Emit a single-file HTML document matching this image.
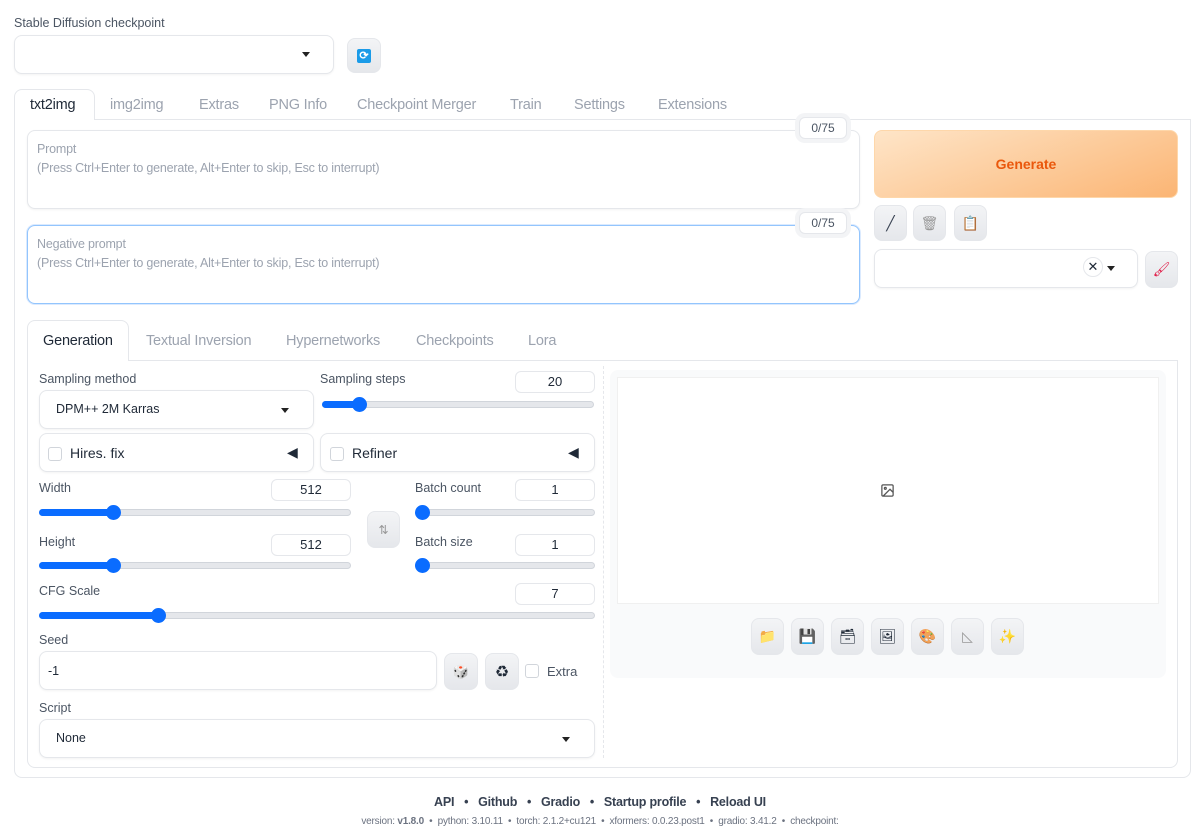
<!DOCTYPE html>
<html><head><meta charset="utf-8"><style>
*{box-sizing:border-box;margin:0;padding:0}
body{width:1200px;height:829px;background:#fff;font-family:"Liberation Sans",sans-serif;color:#1f2937;position:relative;overflow:hidden;font-size:13px}
.a{position:absolute}
.lbl{position:absolute;color:#4b5563;font-size:12.5px}
.box{position:absolute;border:1px solid #e5e7eb;border-radius:8px;background:#fff;box-shadow:0 1px 2px rgba(0,0,0,.05)}
.btn{position:absolute;border-radius:8px;background:linear-gradient(#f3f4f6,#e5e7eb);border:1px solid #e5e7eb;display:flex;align-items:center;justify-content:center;font-size:14px}
.tab{position:absolute;color:#9ca3af;font-size:14.5px;letter-spacing:-0.2px}
.num{position:absolute;border:1px solid #e5e7eb;border-radius:6px;height:22px;width:80px;text-align:center;font-size:13px;line-height:20px;background:#fff}
.track{position:absolute;height:7px;border-radius:4px;background:#e5e7eb;border:1px solid #d1d5db}
.fill{position:absolute;height:7px;border-radius:4px;background:#0a6cff}
.thumb{position:absolute;width:15px;height:15px;border-radius:50%;background:#0a6cff}
.caret{position:absolute;width:0;height:0;border-left:4px solid transparent;border-right:4px solid transparent;border-top:5px solid #222}
.ph{position:absolute;color:#9ca3af;font-size:12.5px;letter-spacing:-0.2px}
.cnt{position:absolute;width:48px;height:22px;border:1px solid #e5e7eb;border-radius:6px;background:#fff;text-align:center;line-height:20px;font-size:12px;color:#4b5563;box-shadow:0 0 0 4px #f3f4f6}
.cb{position:absolute;width:14px;height:14px;border:1px solid #d1d5db;border-radius:3px;background:#fff}
</style></head><body>
<div class="lbl" style="left:14px;top:16px">Stable Diffusion checkpoint</div>
<div class="box" style="left:14px;top:35px;width:320px;height:39px"></div>
<div class="caret" style="left:302px;top:52px"></div>
<div class="btn" style="left:347px;top:38px;width:34px;height:35px"><div style="width:14px;height:14px;background:#1a9be8;border-radius:2px;color:#fff;font-size:11px;font-weight:bold;line-height:14px;text-align:center">⟳</div></div>

<div class="a" style="left:14px;top:89px;width:81px;height:31px;border:1px solid #e5e7eb;border-bottom:none;border-radius:8px 8px 0 0;background:#fff;z-index:2"></div>
<div class="tab" style="left:30px;top:97px;color:#1f2937;z-index:3">txt2img</div>
<div class="tab" style="left:110px;top:97px">img2img</div>
<div class="tab" style="left:199px;top:97px">Extras</div>
<div class="tab" style="left:269px;top:97px">PNG Info</div>
<div class="tab" style="left:357px;top:97px">Checkpoint Merger</div>
<div class="tab" style="left:510px;top:97px">Train</div>
<div class="tab" style="left:574px;top:97px">Settings</div>
<div class="tab" style="left:658px;top:97px">Extensions</div>
<div class="a" style="left:14px;top:119px;width:1177px;height:659px;border:1px solid #e5e7eb;border-radius:0 0 8px 8px"></div>

<div class="box" style="left:27px;top:130px;width:833px;height:79px"></div>
<div class="ph" style="left:37px;top:142px">Prompt</div>
<div class="ph" style="left:37px;top:161px">(Press Ctrl+Enter to generate, Alt+Enter to skip, Esc to interrupt)</div>
<div class="cnt" style="left:799px;top:117px">0/75</div>
<div class="box" style="left:27px;top:225px;width:833px;height:79px;border-color:#93c5fd;box-shadow:0 0 0 1px #dbeafe"></div>
<div class="ph" style="left:37px;top:237px">Negative prompt</div>
<div class="ph" style="left:37px;top:256px">(Press Ctrl+Enter to generate, Alt+Enter to skip, Esc to interrupt)</div>
<div class="cnt" style="left:799px;top:212px">0/75</div>

<div class="a" style="left:874px;top:130px;width:304px;height:68px;border-radius:8px;background:linear-gradient(160deg,#fee5c8,#fbb574);border:1px solid #fed7aa;color:#ea580c;font-weight:bold;font-size:14px;display:flex;align-items:center;justify-content:center">Generate</div>
<div class="btn" style="left:874px;top:205px;width:33px;height:36px;color:#374151">╱</div>
<div class="btn" style="left:913px;top:205px;width:33px;height:36px;color:#999">🗑</div>
<div class="btn" style="left:954px;top:205px;width:33px;height:36px;color:#e38a2c">📋</div>
<div class="box" style="left:874px;top:249px;width:264px;height:39px"></div>
<div class="a" style="left:1083px;top:257px;width:20px;height:20px;border:1px solid #e5e7eb;border-radius:50%;text-align:center;line-height:18px;font-size:13px">✕</div>
<div class="caret" style="left:1107px;top:266px"></div>
<div class="btn" style="left:1145px;top:251px;width:33px;height:37px;color:#e11d48">🖌</div>

<div class="a" style="left:27px;top:320px;width:102px;height:41px;border:1px solid #e5e7eb;border-bottom:none;border-radius:8px 8px 0 0;background:#fff;z-index:2"></div>
<div class="tab" style="left:43px;top:333px;color:#1f2937;z-index:3">Generation</div>
<div class="tab" style="left:146px;top:333px">Textual Inversion</div>
<div class="tab" style="left:286px;top:333px">Hypernetworks</div>
<div class="tab" style="left:416px;top:333px">Checkpoints</div>
<div class="tab" style="left:528px;top:333px">Lora</div>
<div class="a" style="left:27px;top:360px;width:1151px;height:408px;border:1px solid #e5e7eb;border-radius:0 0 8px 8px"></div>

<div class="lbl" style="left:39px;top:372px">Sampling method</div>
<div class="box" style="left:39px;top:390px;width:275px;height:39px"></div>
<div class="a" style="left:56px;top:402px;font-size:12.5px">DPM++ 2M Karras</div>
<div class="caret" style="left:281px;top:408px"></div>
<div class="lbl" style="left:320px;top:372px">Sampling steps</div>
<div class="num" style="left:515px;top:371px">20</div>
<div class="track" style="left:322px;top:401px;width:272px"></div><div class="fill" style="left:322px;top:401px;width:38px"></div><div class="thumb" style="left:352px;top:397px"></div>

<div class="box" style="left:39px;top:433px;width:275px;height:39px"></div>
<div class="cb" style="left:48px;top:447px"></div><div class="a" style="left:70px;top:445px;font-size:14px">Hires. fix</div><div class="a" style="left:287px;top:444px;font-size:14px">◀</div>
<div class="box" style="left:320px;top:433px;width:275px;height:39px"></div>
<div class="cb" style="left:330px;top:447px"></div><div class="a" style="left:352px;top:445px;font-size:14px">Refiner</div><div class="a" style="left:568px;top:444px;font-size:14px">◀</div>

<div class="lbl" style="left:39px;top:481px">Width</div>
<div class="num" style="left:271px;top:479px">512</div>
<div class="track" style="left:39px;top:509px;width:312px"></div><div class="fill" style="left:39px;top:509px;width:75px"></div><div class="thumb" style="left:106px;top:505px"></div>
<div class="lbl" style="left:39px;top:535px">Height</div>
<div class="num" style="left:271px;top:534px">512</div>
<div class="track" style="left:39px;top:562px;width:312px"></div><div class="fill" style="left:39px;top:562px;width:75px"></div><div class="thumb" style="left:106px;top:558px"></div>
<div class="btn" style="left:367px;top:511px;width:33px;height:37px;color:#999;font-size:12px">⇅</div>
<div class="lbl" style="left:415px;top:481px">Batch count</div>
<div class="num" style="left:515px;top:479px">1</div>
<div class="track" style="left:415px;top:509px;width:180px"></div><div class="thumb" style="left:415px;top:505px"></div>
<div class="lbl" style="left:415px;top:535px">Batch size</div>
<div class="num" style="left:515px;top:534px">1</div>
<div class="track" style="left:415px;top:562px;width:180px"></div><div class="thumb" style="left:415px;top:558px"></div>

<div class="lbl" style="left:39px;top:584px">CFG Scale</div>
<div class="num" style="left:515px;top:583px">7</div>
<div class="track" style="left:39px;top:612px;width:556px"></div><div class="fill" style="left:39px;top:612px;width:120px"></div><div class="thumb" style="left:151px;top:608px"></div>

<div class="lbl" style="left:39px;top:633px">Seed</div>
<div class="box" style="left:39px;top:651px;width:398px;height:39px"></div>
<div class="a" style="left:48px;top:664px;font-size:12.5px">-1</div>
<div class="btn" style="left:444px;top:653px;width:34px;height:37px;color:#a78bfa;font-size:13px">🎲</div>
<div class="btn" style="left:485px;top:653px;width:34px;height:37px;font-size:16px">♻</div>
<div class="cb" style="left:525px;top:664px"></div><div class="a" style="left:547px;top:664px;color:#4b5563;font-size:13px">Extra</div>

<div class="lbl" style="left:39px;top:701px">Script</div>
<div class="box" style="left:39px;top:719px;width:556px;height:39px"></div>
<div class="a" style="left:56px;top:731px;font-size:12.5px">None</div>
<div class="caret" style="left:562px;top:737px"></div>

<div class="a" style="left:603px;top:366px;height:392px;border-left:1px dashed #e5e7eb"></div>
<div class="a" style="left:610px;top:370px;width:556px;height:308px;background:#f9fafb;border-radius:8px"></div>
<div class="a" style="left:617px;top:377px;width:542px;height:227px;background:#fff;border:1px solid #f0f0f0"></div>
<svg class="a" style="left:880px;top:483px" width="15" height="15" viewBox="0 0 24 24" fill="none" stroke="#555" stroke-width="2"><rect x="3" y="3" width="18" height="18" rx="2"/><circle cx="8.5" cy="8.5" r="1.5"/><path d="M21 15l-5-5L5 21"/></svg>
<div class="btn" style="left:751px;top:618px;width:33px;height:37px;color:#fbbf24">📁</div>
<div class="btn" style="left:791px;top:618px;width:33px;height:37px">💾</div>
<div class="btn" style="left:831px;top:618px;width:33px;height:37px">🗃</div>
<div class="btn" style="left:871px;top:618px;width:33px;height:37px">🖼</div>
<div class="btn" style="left:911px;top:618px;width:33px;height:37px">🎨</div>
<div class="btn" style="left:951px;top:618px;width:33px;height:37px;color:#999">◺</div>
<div class="btn" style="left:991px;top:618px;width:33px;height:37px;color:#fbbf24">✨</div>

<div class="a" style="left:0;top:795px;width:1200px;text-align:center;font-size:12.5px;font-weight:bold;color:#374151;letter-spacing:-0.2px">API &nbsp;&nbsp;•&nbsp;&nbsp; Github &nbsp;&nbsp;•&nbsp;&nbsp; Gradio &nbsp;&nbsp;•&nbsp;&nbsp; Startup profile &nbsp;&nbsp;•&nbsp;&nbsp; Reload UI</div>
<div class="a" style="left:0;top:816px;width:1200px;text-align:center;font-size:10px;color:#6b7280;letter-spacing:-0.2px">version: <b>v1.8.0</b> &nbsp;•&nbsp; python: 3.10.11 &nbsp;•&nbsp; torch: 2.1.2+cu121 &nbsp;•&nbsp; xformers: 0.0.23.post1 &nbsp;•&nbsp; gradio: 3.41.2 &nbsp;•&nbsp; checkpoint:</div>
</body></html>
